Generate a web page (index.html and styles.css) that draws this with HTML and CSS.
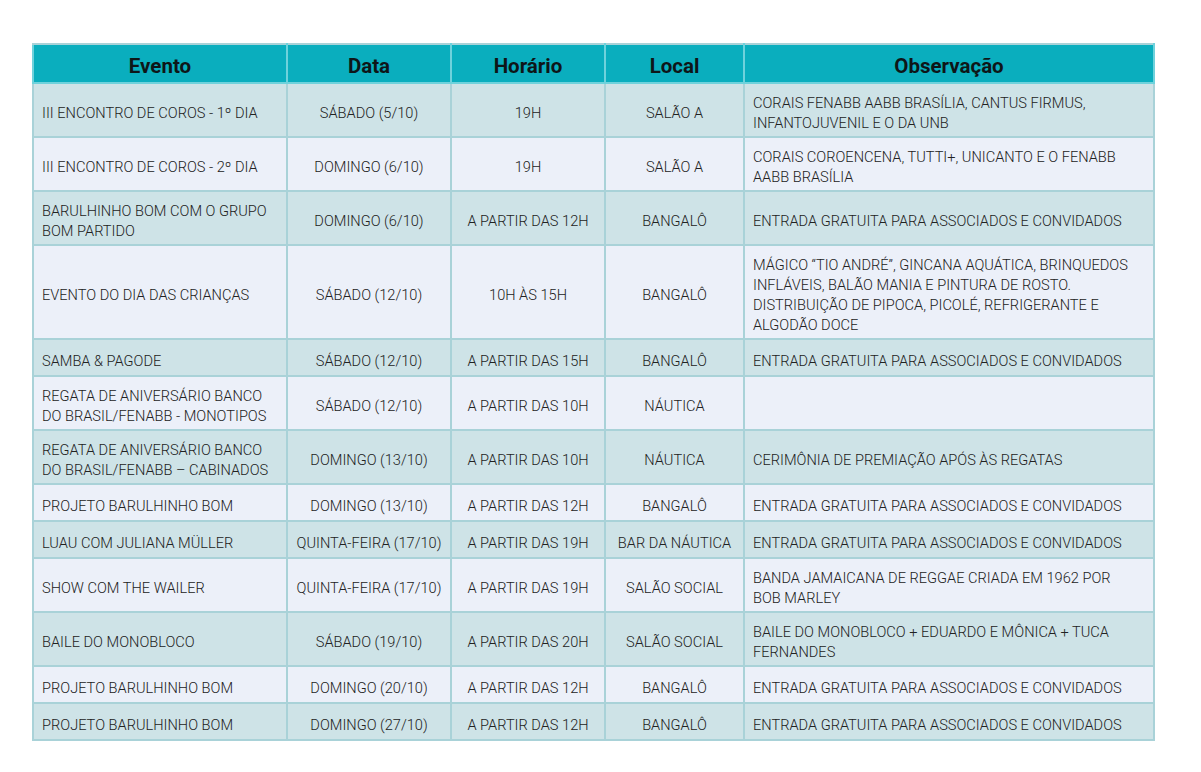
FILE: index.html
```html
<!DOCTYPE html>
<html lang="pt-BR">
<head>
<meta charset="utf-8">
<title>Programação</title>
<link rel="stylesheet" href="styles.css">
</head>
<body>
<div class="page">
<table class="agenda">
  <colgroup>
    <col class="c-evento"><col class="c-data"><col class="c-hora"><col class="c-local"><col class="c-obs">
  </colgroup>
  <thead>
    <tr><th>Evento</th><th>Data</th><th>Horário</th><th>Local</th><th>Observação</th></tr>
  </thead>
  <tbody>
    <tr class="dark h2"><td>III ENCONTRO DE COROS - 1º DIA</td><td class="c">SÁBADO (5/10)</td><td class="c">19H</td><td class="c">SALÃO A</td><td class="obs">CORAIS FENABB AABB BRASÍLIA, CANTUS FIRMUS, INFANTOJUVENIL E O DA UNB</td></tr>
    <tr class="light h2"><td>III ENCONTRO DE COROS - 2º DIA</td><td class="c">DOMINGO (6/10)</td><td class="c">19H</td><td class="c">SALÃO A</td><td class="obs">CORAIS COROENCENA, TUTTI+, UNICANTO E O FENABB AABB BRASÍLIA</td></tr>
    <tr class="dark h2"><td>BARULHINHO BOM COM O GRUPO BOM PARTIDO</td><td class="c">DOMINGO (6/10)</td><td class="c">A PARTIR DAS 12H</td><td class="c">BANGALÔ</td><td class="obs">ENTRADA GRATUITA PARA ASSOCIADOS E CONVIDADOS</td></tr>
    <tr class="light h4"><td>EVENTO DO DIA DAS CRIANÇAS</td><td class="c">SÁBADO (12/10)</td><td class="c">10H ÀS 15H</td><td class="c">BANGALÔ</td><td class="obs">MÁGICO “TIO ANDRÉ”, GINCANA AQUÁTICA, BRINQUEDOS INFLÁVEIS, BALÃO MANIA E PINTURA DE ROSTO. DISTRIBUIÇÃO DE PIPOCA, PICOLÉ, REFRIGERANTE E ALGODÃO DOCE</td></tr>
    <tr class="dark h1"><td>SAMBA &amp; PAGODE</td><td class="c">SÁBADO (12/10)</td><td class="c">A PARTIR DAS 15H</td><td class="c">BANGALÔ</td><td class="obs">ENTRADA GRATUITA PARA ASSOCIADOS E CONVIDADOS</td></tr>
    <tr class="light h2"><td>REGATA DE ANIVERSÁRIO BANCO DO BRASIL/FENABB - MONOTIPOS</td><td class="c">SÁBADO (12/10)</td><td class="c">A PARTIR DAS 10H</td><td class="c">NÁUTICA</td><td class="obs"></td></tr>
    <tr class="dark h2"><td>REGATA DE ANIVERSÁRIO BANCO DO BRASIL/FENABB – CABINADOS</td><td class="c">DOMINGO (13/10)</td><td class="c">A PARTIR DAS 10H</td><td class="c">NÁUTICA</td><td class="obs">CERIMÔNIA DE PREMIAÇÃO APÓS ÀS REGATAS</td></tr>
    <tr class="light h1"><td>PROJETO BARULHINHO BOM</td><td class="c">DOMINGO (13/10)</td><td class="c">A PARTIR DAS 12H</td><td class="c">BANGALÔ</td><td class="obs">ENTRADA GRATUITA PARA ASSOCIADOS E CONVIDADOS</td></tr>
    <tr class="dark h1"><td>LUAU COM JULIANA MÜLLER</td><td class="c">QUINTA-FEIRA (17/10)</td><td class="c">A PARTIR DAS 19H</td><td class="c">BAR DA NÁUTICA</td><td class="obs">ENTRADA GRATUITA PARA ASSOCIADOS E CONVIDADOS</td></tr>
    <tr class="light h2"><td>SHOW COM THE WAILER</td><td class="c">QUINTA-FEIRA (17/10)</td><td class="c">A PARTIR DAS 19H</td><td class="c">SALÃO SOCIAL</td><td class="obs">BANDA JAMAICANA DE REGGAE CRIADA EM 1962 POR BOB MARLEY</td></tr>
    <tr class="dark h2"><td>BAILE DO MONOBLOCO</td><td class="c">SÁBADO (19/10)</td><td class="c">A PARTIR DAS 20H</td><td class="c">SALÃO SOCIAL</td><td class="obs">BAILE DO MONOBLOCO + EDUARDO E MÔNICA + TUCA FERNANDES</td></tr>
    <tr class="light h1"><td>PROJETO BARULHINHO BOM</td><td class="c">DOMINGO (20/10)</td><td class="c">A PARTIR DAS 12H</td><td class="c">BANGALÔ</td><td class="obs">ENTRADA GRATUITA PARA ASSOCIADOS E CONVIDADOS</td></tr>
    <tr class="dark h1"><td>PROJETO BARULHINHO BOM</td><td class="c">DOMINGO (27/10)</td><td class="c">A PARTIR DAS 12H</td><td class="c">BANGALÔ</td><td class="obs">ENTRADA GRATUITA PARA ASSOCIADOS E CONVIDADOS</td></tr>
  </tbody>
</table>
</div>
</body>
</html>
```

FILE: styles.css
```css
html, body {
  margin: 0;
  padding: 0;
  background: #ffffff;
}

.page {
  padding: 43px 0 0 32px;
}

.agenda {
  border-collapse: collapse;
  table-layout: fixed;
  width: 1121px;
  font-family: Roboto, "Liberation Sans", sans-serif;
  font-weight: 300;
  font-size: 14.6px;
  color: #222222;
  border: 2px solid #a9d2d8;
}

.c-evento { width: 254px; }
.c-data { width: 164px; }
.c-hora { width: 154px; }
.c-local { width: 139px; }
.c-obs { width: 410px; }

.agenda th {
  background: #0aaebe;
  color: #0e1618;
  font-weight: 700;
  font-size: 20.5px;
  height: 33px;
  padding: 4px 0 0;
  border: 2px solid #6fd2dc;
  border-top-color: #a9d2d8;
  text-align: center;
  vertical-align: middle;
}

.agenda td {
  border: 2px solid #a9d2d8;
  padding: 6px 8px 0;
  line-height: 20px;
  vertical-align: middle;
  text-align: left;
}

.agenda td.c {
  text-align: center;
  padding: 6px 4px 0;
}

.agenda td.obs {
  padding-right: 12px;
}

.dark td { background: #cee3e7; }
.light td { background: #ecf0f9; }

.h1 td { height: 29px; }
.h2 td { height: 46px; }
.h4 td { height: 86px; }
```
